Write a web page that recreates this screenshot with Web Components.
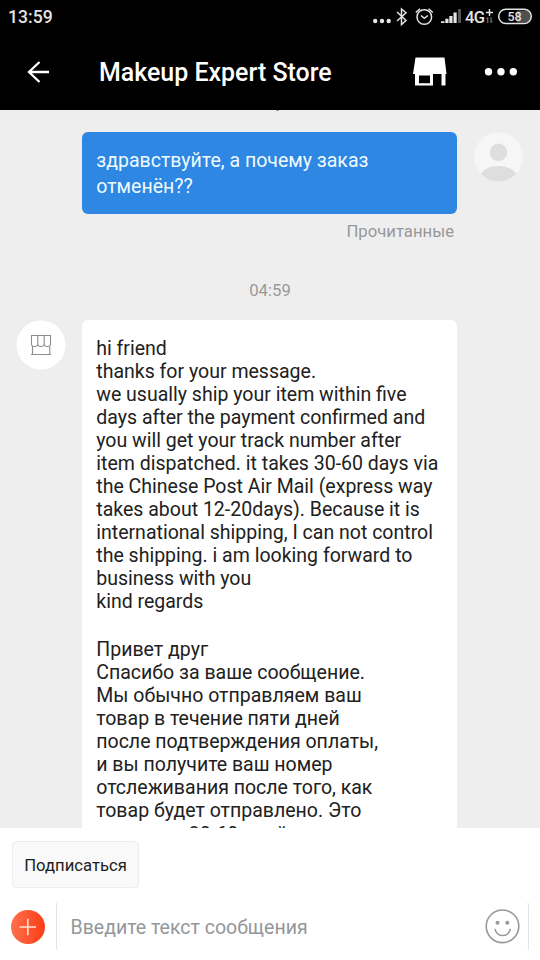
<!DOCTYPE html>
<html lang="ru">
<head>
<meta charset="utf-8">
<title>Makeup Expert Store</title>
<style>
html,body{margin:0;height:100%}
body{font-family:Roboto,"Noto Sans",sans-serif;overflow:hidden}
</style>
</head>
<body>
<chat-app></chat-app>
<script>
function define(name, markup) {
  const t = document.createElement('template');
  t.innerHTML = markup;
  customElements.define(name, class extends HTMLElement {
    constructor() {
      super();
      this.attachShadow({ mode: 'open' }).appendChild(t.content.cloneNode(true));
    }
  });
}

define('status-bar', `<style>
:host{display:flex;height:33px;box-sizing:border-box;padding:0 8px;color:#e4e4e4;justify-content:space-between}
.t{font-size:17.6px;font-weight:500;line-height:34px}
svg{display:block;margin-right:-8px}
text{font-family:Roboto,sans-serif;font-weight:500;fill:#e4e4e4}
</style><span class="t">13:59</span>
<svg width="180" height="33" viewBox="0 0 180 33" fill="none" stroke="#e4e4e4">
<g fill="#e4e4e4" stroke="none"><circle cx="15.2" cy="21" r="2.2"/><circle cx="22" cy="21" r="2.2"/><circle cx="28.7" cy="21" r="2.2"/></g>
<path d="M37 12l9 8.500-4.500 4V9l4.500 3.800-9 8.200" stroke-width="1.500"/>
<circle cx="64.300" cy="17" r="7.300" stroke-width="1.500"/><path d="M61 15.500l3.300 2.800 3.600-2.800M55.800 12.500l4.200-3.800M72.800 12.500l-4.200-3.800" stroke-width="1.500"/>
<g fill="#e4e4e4" stroke="none"><path d="M81 21.200h3.500V23H81zM85.300 18.800h3.200V23h-3.200zM89.300 16h3.200v7h-3.200zM93.500 12.500h3.200V23h-3.200z"/><path fill="#555" d="M98 9h3v14h-3z"/>
<text x="105" y="22.800" font-size="16.500" textLength="20">4G</text></g>
<path d="M126 12.500h7M129.500 9v7" stroke-width="1.400"/><path d="M127.800 23v-5.500l-1.500 1.500M131 17v5.500l1.500-1.500" stroke="#888" stroke-width="1"/>
<path d="M157 10.500h8.500a6 6 0 0 1 0 12H157z" fill="#505050" stroke="none"/><rect x="138.700" y="9.200" width="32.600" height="14.300" rx="7.150" stroke-width="1.500"/>
<text x="154.500" y="21" font-size="12.500" text-anchor="middle" stroke="none">58</text>
</svg>`);

define('store-toolbar', `<style>
:host{display:flex;align-items:center;height:77px;box-sizing:border-box;padding:0 22px 0 26px;color:#fff}
svg{display:block;flex:none}
h1{margin:2px auto 0 47px;font-size:24.950px;font-weight:500;line-height:30px;white-space:nowrap}
.shop{margin:0 37px 0 0}
</style>
<svg width="26" height="26" viewBox="0 0 26 26" fill="none" stroke="#fff" stroke-width="2.300"><path d="M23 13H3M13.500 3L3 13l10.500 10"/></svg>
<h1><slot></slot></h1>
<svg class="shop" width="34" height="30" viewBox="0 0 34 30" fill="#fff"><path fill-rule="evenodd" d="M2.500 0.500h29L33.500 17h-1V28.500h-4V17h-8.500V28.500H2V17H0zM6 18.500v7.800h11V18.500z"/></svg>
<svg width="34" height="10" viewBox="0 0 34 10" fill="#fff"><circle cx="4.500" cy="4.800" r="3.700"/><circle cx="17" cy="4.800" r="3.700"/><circle cx="29.300" cy="4.800" r="3.700"/></svg>`);

define('user-avatar', `<style>:host{display:block;width:50px;height:50px}svg{display:block}</style>
<svg width="50" height="50" viewBox="0 0 50 50"><defs><clipPath id="c"><circle cx="24.500" cy="25" r="24.500"/></clipPath></defs><circle cx="24.500" cy="25" r="24.500" fill="#f6f6f6"/><g fill="#dedede" clip-path="url(#c)"><circle cx="24.500" cy="20.300" r="8.700"/><ellipse cx="24.500" cy="45.500" rx="18.500" ry="11.500"/></g></svg>`);

define('shop-avatar', `<style>:host{display:block;width:50px;height:50px}svg{display:block}</style>
<svg width="50" height="50" viewBox="0 0 50 50" fill="none" stroke="#8c8c8c" stroke-width="1.100"><circle cx="25" cy="25" r="24.500" fill="#fff" stroke="none"/><path d="M15.500 15.500h19v9q-.3 2-3.200 2t-3.100-2q-.3 2-3.200 2t-3.200-2q-.3 2-3.200 2t-3.100-2zM21.800 15.500v9M28.200 15.500v9M16.500 26.500v7.800M33.800 26.500v7.800M15 34.500h20.200"/></svg>`);

define('chat-bubble', `<style>
:host{display:block;box-sizing:border-box;width:375px;border-radius:6px;padding:17px 14px 17px 14.250px;background:#fff;color:#212121;font-size:19.530px;line-height:23px;white-space:pre}
:host([own]){background:#2d87e3;color:#effaff;line-height:26px;height:82px;padding-top:16px}
</style><slot></slot>`);

define('chat-thread', `<style>
:host{display:block;height:718px;background:#eee;overflow:hidden}
.scrap{display:block;width:3px;height:1px;margin-left:276px;background:#999}
.row{display:flex;align-items:flex-start}
.own{padding:21px 16px 0 82px;justify-content:space-between}
.read{padding:6px 86px 0 0;text-align:right;font-size:16.700px;line-height:24px;color:#999}
.time{margin-top:35px;text-align:center;font-size:16.700px;line-height:24px;color:#999}
.theirs{padding:17px 0 0 16px;gap:16px}
.gap{height:25px}
.last{padding-top:1px}
</style>
<i class="scrap"></i>
<div class="row own"><chat-bubble own>здравствуйте, а почему заказ
отменён??</chat-bubble><user-avatar></user-avatar></div>
<div class="read">Прочитанные</div>
<div class="time">04:59</div>
<div class="row theirs"><shop-avatar></shop-avatar><chat-bubble>hi friend
thanks for your message.
we usually ship your item within five
days after the payment confirmed and
you will get your track number after
item dispatched. it takes 30-60 days via
the Chinese Post Air Mail (express way
takes about 12-20days). Because it is
international shipping, I can not control
the shipping. i am looking forward to
business with you
kind regards
<div class="gap"></div>Привет друг
Спасибо за ваше сообщение.
Мы обычно отправляем ваш
товар в течение пяти дней
после подтверждения оплаты,
и вы получите ваш номер
отслеживания после того, как
товар будет отправлено. Это
<div class="last">занимает 30-60 дней</div></chat-bubble></div>`);

define('chat-composer', `<style>
:host{display:block;height:132px;box-sizing:border-box;background:#fff;padding:13px 11px 0 11px}
button{display:block;box-sizing:border-box;margin:0 0 0 1px;width:127px;height:47px;padding:1px 0 0;border:1px solid #ededed;border-radius:4px;background:#f9f9f9;color:#212121;font:16.650px/46px Roboto,sans-serif;white-space:nowrap}
.line{display:flex;align-items:center;margin-top:14px;height:49px}
svg{display:block;flex:none}
.field{display:flex;align-items:center;box-sizing:border-box;width:473px;height:49px;margin-left:11px;padding:0 8px 0 13.500px;border:solid #e1e5e6;border-width:0 1px;border-radius:3px;justify-content:space-between}
.ph{font-size:19.500px;line-height:26px;color:#93979a;white-space:nowrap;padding-top:2px}
</style>
<button>Подписаться</button>
<div class="line"><svg width="34" height="36" viewBox="0 0 34 36"><defs><linearGradient id="g"><stop offset="0" stop-color="#ff704c"/><stop offset="1" stop-color="#fb3d15"/></linearGradient></defs><circle cx="17" cy="18" r="17" fill="url(#g)"/><path d="M8.500 18h16.500M16.800 9.700v16.600" stroke="#ffe3d8" stroke-width="1.600"/></svg>
<div class="field"><span class="ph">Введите текст сообщения</span><svg width="35" height="35" viewBox="0 0 35 35" fill="none" stroke="#999" stroke-width="1.600"><circle cx="17.500" cy="17.300" r="16.300"/><path d="M10 19.800c1.500 9 13.800 9 15.300 0"/><g fill="#999" stroke="none"><circle cx="12.500" cy="13.700" r="2"/><circle cx="22.300" cy="13.700" r="2"/></g></svg></div></div>`);

define('chat-app', `<style>:host{display:block;width:540px;height:960px}header{background:#000}</style>
<header><status-bar></status-bar><store-toolbar>Makeup Expert Store</store-toolbar></header>
<chat-thread></chat-thread><chat-composer></chat-composer>`);
</script>
</body>
</html>
